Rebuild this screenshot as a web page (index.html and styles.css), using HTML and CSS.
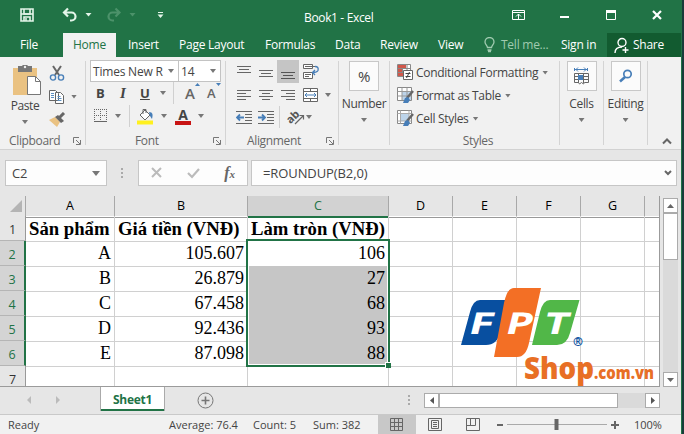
FILE: index.html
```html
<!DOCTYPE html>
<html lang="vi">
<head>
<meta charset="utf-8">
<title>Book1 - Excel</title>
<link rel="stylesheet" href="styles.css">
</head>
<body>
<div class="window">
  <header class="titlebar">
    <svg class="quick" width="170" height="33" fill="none">
      <path d="M21 9h12v12H21zM24 9v5h6V9M24 21v-4h6v4" stroke="#e4f5e9" stroke-width="1.6"/>
      <path d="M21 14h12" stroke="#e4f5e9" stroke-width="1.5"/><path d="M26 18v3" stroke="#e4f5e9" stroke-width="1.5"/>
      <path d="M68 8.500l-4 4 4 4M65 12.500h6.500a4 4 0 0 1 0 8H70" stroke="#e4f5e9" stroke-width="2.200"/>
      <path d="M85.500 13h6l-3 3.500z" fill="#e4f5e9"/>
      <path d="M115.500 8.500l4 4-4 4M119 12.500h-6.500a4 4 0 0 0 0 8h1.500" stroke="#4c926a" stroke-width="2.200"/>
      <path d="M129.500 13h6l-3 3.500z" fill="#4c926a"/>
      <path d="M158 12.500h5" stroke="#e4f5e9"/><path d="M157.500 14.500h6l-3 3.500z" fill="#e4f5e9"/>
    </svg>
    <h1>Book1 - Excel</h1>
    <svg class="controls" width="170" height="33" fill="none" stroke="#fff">
      <path d="M1.500 10.500h12v9h-12zM1.500 12.500h12M7.500 19v-5M5 16.500l2.500-2.500 2.500 2.500"/>
      <path d="M49 17h9" stroke-width="2"/>
      <path d="M95.500 11h9v8.500h-9z"/><path d="M95 11.500h10" stroke-width="3"/>
      <path d="M142 11l8 8m0-8l-8 8" stroke-width="2.200"/>
    </svg>
  </header>
  <nav class="tabs">
    <span class="tab file">File</span><span class="tab home">Home</span><span class="tab insert">Insert</span><span class="tab layout">Page Layout</span><span class="tab formulas">Formulas</span><span class="tab data">Data</span><span class="tab review">Review</span><span class="tab view">View</span>
    <span class="tab tell"><svg width="12" height="16" fill="none" stroke="#a0cbb0" stroke-width="1.300"><path d="M3.500 10.500C3 8 1 7.500 1 5a4.500 4.500 0 0 1 9 0c0 2.500-2 3-2.500 5.500zM3.500 13h4M4 14.500h3"/></svg>Tell me...</span>
    <span class="tab signin">Sign in</span>
    <span class="tab share"><svg width="16" height="17" fill="none" stroke="#fff" stroke-width="1.400"><circle cx="8" cy="5.500" r="4"/><path d="M1 16c0-4 3-6 7-6M11.500 10v6M8.500 13h6"/></svg>Share</span>
  </nav>

  <section class="ribbon">
    <div class="group clipboard">
      <div class="body">
        <div class="paste">
          <svg width="29" height="32"><path d="M0 3h24v27H0z" fill="#eac282"/><path d="M5 1h4a3.500 3.500 0 0 1 6 0h4v6H5z" fill="#777"/><circle cx="12" cy="2" r="1.200" fill="#f0f0f0"/><path d="M14.500 11.500h8l5 5v13h-13z" fill="#fff" stroke="#777"/><path d="M22.500 11.500v5h5" fill="none" stroke="#777"/></svg>
          <span>Paste</span><i class="arrow"></i>
        </div>
        <div class="tools">
          <div><svg width="16" height="17" fill="none"><path d="M4 1l6 9M12 1L6 10" stroke="#666" stroke-width="2"/><circle cx="4" cy="12.500" r="2.600" stroke="#477eb8" stroke-width="1.400"/><circle cx="12" cy="12.500" r="2.600" stroke="#477eb8" stroke-width="1.400"/></svg></div>
          <div><svg width="16" height="15" fill="#fff" stroke="#666"><path d="M.5 1.500h6l3 3v7h-9zM6.500 3.500h5l3 3v8h-8z"/><path d="M2 4.500h3M2 6.500h3M2 8.500h3M8.500 7.500h3M8.500 9.500h4M8.500 11.500h4" stroke="#5e91c2"/></svg><i class="arrow"></i></div>
          <div><svg width="17" height="16"><path d="M0 8l6-3 5 5-3 5z" fill="#eac282"/><path d="M6 5l3-2 6 6-3 2z" fill="#666"/><path d="M10 6l5-5" stroke="#666" stroke-width="3"/></svg></div>
        </div>
      </div>
      <footer>Clipboard<svg class="launcher" width="8" height="8" fill="none" stroke="#777"><path d="M.5 6V.5H6M3 3l4 4M7.500 3v4.500H3"/></svg></footer>
    </div>

    <div class="group font">
      <div class="selects"><div class="select name">Times New R<i class="arrow"></i></div><div class="select size">14<i class="arrow"></i></div></div>
      <div class="row letters"><b>B</b><em>I</em><u>U</u><i class="arrow"></i><s class="sep"></s>
        <span class="grow">A<svg width="5" height="3"><path d="M0 3h5L2.500 0z" fill="#477eb8"/></svg></span><span class="shrink">A<svg width="5" height="3"><path d="M0 0h5L2.500 3z" fill="#477eb8"/></svg></span></div>
      <div class="row fills">
        <svg width="14" height="14" fill="none" stroke="#666"><path d="M.5 0v13M6.500 0v13M12.500 0v13M0 .5h13M0 6.500h13" stroke-dasharray="1 1"/><path d="M0 12.500h13"/></svg><i class="arrow"></i><s class="sep"></s>
        <svg width="17" height="17" fill="none"><path d="M8 2l5 5-5 5-5-5zM6 6V1.500h3V5" fill="#fff" stroke="#666"/><path d="M12 4c4 0 4 3 3 7l-2-3z" fill="#477eb8"/><path d="M0 12.500h16v4H0z" fill="#fff01e"/></svg><i class="arrow"></i>
        <span class="fontcolor">A</span><i class="arrow"></i>
      </div>
      <footer>Font<svg class="launcher" width="8" height="8" fill="none" stroke="#777"><path d="M.5 6V.5H6M3 3l4 4M7.500 3v4.500H3"/></svg></footer>
    </div>

    <div class="group align">
      <div class="row r1">
        <span><svg width="14" height="14" stroke="#666"><path d="M0 1.500h14M2 4.500h10M0 7.500h14"/></svg></span>
        <span><svg width="14" height="14" stroke="#666"><path d="M0 5.500h14M2 8.500h10M0 11.500h14"/></svg></span>
        <span class="on"><svg width="14" height="14" stroke="#555"><path d="M0 7.500h14M2 10.500h10M0 13.500h14"/></svg></span>
        <svg class="wide" width="17" height="16" fill="none"><path d="M.5.500h9v4h-9zM.5 8.500h9v6h-9z" fill="#fff" stroke="#666"/><path d="M2 2.500h10M2 10.500h6M2 12.500h4" stroke="#666"/><path d="M12 2.500q4 0 3 4-1 2-5 2M12 6l-2.500 2.500L12 11" stroke="#477eb8" stroke-width="1.300"/></svg>
      </div>
      <div class="row r2">
        <span><svg width="14" height="12" stroke="#666"><path d="M0 1.500h14M0 4.500h9M0 7.500h14M0 10.500h9"/></svg></span>
        <span><svg width="14" height="12" stroke="#666"><path d="M0 1.500h14M3 4.500h8M0 7.500h14M3 10.500h8"/></svg></span>
        <span><svg width="14" height="12" stroke="#666"><path d="M0 1.500h14M5 4.500h9M0 7.500h14M5 10.500h9"/></svg></span>
        <svg class="wide" width="16" height="15" fill="none"><path d="M.5.500h14v13H.5zM.5 3.500h14M.5 10.500h14M7.500.500v3M7.500 10.500v3" fill="#fff" stroke="#666"/><path d="M2 7h11M4 5L2 7l2 2M11 5l2 2-2 2" stroke="#477eb8"/></svg><i class="arrow"></i>
      </div>
      <div class="row r3">
        <span><svg width="17" height="13" fill="none"><path d="M0 .5h16M9 3.500h7M9 6.500h7M9 9.500h7M0 12.500h16" stroke="#666"/><path d="M1 6.500h7M4 3.500l-3 3 3 3" stroke="#477eb8" stroke-width="1.800"/></svg></span>
        <span><svg width="17" height="13" fill="none"><path d="M0 .5h16M9 3.500h7M9 6.500h7M9 9.500h7M0 12.500h16" stroke="#666"/><path d="M0 6.500h7M4 3.500l3 3-3 3" stroke="#477eb8" stroke-width="1.800"/></svg></span>
        <s class="sep"></s>
        <svg class="orient" width="18" height="18" fill="none"><text x="0" y="12" transform="rotate(-45 7 10)" font-size="11" font-weight="bold" fill="#555">ab</text><path d="M8 16l8-8M12.500 7.500H16.500V11.500" stroke="#666" stroke-width="1.200"/></svg><i class="arrow"></i>
      </div>
      <footer>Alignment<svg class="launcher" width="8" height="8" fill="none" stroke="#777"><path d="M.5 6V.5H6M3 3l4 4M7.500 3v4.500H3"/></svg></footer>
    </div>

    <div class="group big number"><div class="tile">%</div><span>Number</span><i class="arrow"></i></div>

    <div class="group styles">
      <div class="item"><svg width="17" height="17"><path d="M.5.500h13v12H.5zM.5 4.500h13M.5 8.500h13M5.500.500v12M10 .5v12" fill="#fff" stroke="#888"/><path d="M1 1h8v3H1zM1 5h4v3H1zM1 9h7v3H1z" fill="#d0574b"/><path d="M6.500 6.500h9v9h-9z" fill="#fff" stroke="#666"/><path d="M8.500 9.500h5M8.500 12.500h5M12.500 8l-3 6" stroke="#444"/></svg>Conditional Formatting<i class="arrow"></i></div>
      <div class="item"><svg width="17" height="17"><path d="M.5.500h14v13H.5z" fill="#fff" stroke="#888"/><path d="M5 5h9v8H5z" fill="#bdd4ea"/><path d="M.5 4.500h14M.5 9h14M5 .5v13M10 .5v13" stroke="#999"/><path d="M16 4l-6 7" stroke="#666" stroke-width="2.500"/><path d="M6 16l2-5 3-1 2 3-2 3z" fill="#477eb8"/></svg>Format as Table<i class="arrow"></i></div>
      <div class="item"><svg width="17" height="17"><path d="M.5.500h14v13H.5z" fill="#fff" stroke="#888"/><path d="M4 4h8v7H4z" fill="#bdd4ea"/><path d="M.5 3.500h14M.5 11h14M3.500.500v13M12 .5v13" stroke="#aaa"/><path d="M16 4l-6 7" stroke="#666" stroke-width="2.500"/><path d="M6 16l2-5 3-1 2 3-2 3z" fill="#477eb8"/></svg>Cell Styles<i class="arrow"></i></div>
      <footer>Styles</footer>
    </div>

    <div class="group big cells"><div class="tile"><svg width="16" height="18" fill="none"><path d="M1 2.500h12M4 .5l-2 2 2 2M10 .5l2 2-2 2M.5 1v3M13.500 1v3" stroke="#477eb8"/><path d="M.5 6.500h14v9h-4l-1 1.500-2-1.500-2 1.500-1-1.500h-4zM.5 9.500h14M.5 12.500h14M4.500 6v10M9.500 6v10" stroke="#666"/><path d="M4 8h5v5H4z" fill="#477eb8"/></svg></div><span>Cells</span><i class="arrow"></i></div>
    <div class="group big editing"><div class="tile"><svg width="14" height="14" fill="none" stroke="#477eb8"><circle cx="8.500" cy="5" r="3.700" stroke-width="1.700"/><path d="M6 8l-5 4.500" stroke-width="2.500"/></svg></div><span>Editing</span><i class="arrow"></i></div>
    <svg class="collapse" width="10" height="7" fill="none"><path d="M1 5.500l4-4 4 4" stroke="#666" stroke-width="2"/></svg>
  </section>

  <section class="formula">
    <div class="box ref">C2<svg width="8" height="5"><path d="M0 0h8L4 5z" fill="#777"/></svg></div>
    <svg class="dots" width="3" height="12" fill="#aaa"><path d="M0 1h2v2H0zM0 5h2v2H0zM0 9h2v2H0z"/></svg>
    <div class="box actions"><svg width="12" height="12" fill="none" stroke="#bbb" stroke-width="2"><path d="M1 1l9 9M10 1l-9 9"/></svg><svg width="14" height="12" fill="none" stroke="#bbb" stroke-width="2.200"><path d="M1 6l4 4 7-8"/></svg><span class="fx">f<small>x</small></span></div>
    <div class="box input">=ROUNDUP(B2,0)<svg width="8" height="6" fill="none" stroke="#666" stroke-width="2"><path d="M1 1l3 3 3-3"/></svg></div>
  </section>

  <main class="work">
    <div class="sheet">
      <div class="line heads"><span class="corner"><svg width="12" height="12"><path d="M12 0v12H0z" fill="#b4b4b4"/></svg></span><span>A</span><span>B</span><span class="active">C</span><span>D</span><span>E</span><span>F</span><span>G</span><span></span></div>
      <div class="line title"><span class="num plain">1</span><span>Sản phẩm</span><span>Giá tiền (VNĐ)</span><span>Làm tròn (VNĐ)</span><span></span><span></span><span></span><span></span><span></span></div>
      <div class="line"><span class="num">2</span><span>A</span><span>105.607</span><span>106</span><span></span><span></span><span></span><span></span><span></span></div>
      <div class="line"><span class="num">3</span><span>B</span><span>26.879</span><span class="sel">27</span><span></span><span></span><span></span><span></span><span></span></div>
      <div class="line"><span class="num">4</span><span>C</span><span>67.458</span><span class="sel">68</span><span></span><span></span><span></span><span></span><span></span></div>
      <div class="line"><span class="num">5</span><span>D</span><span>92.436</span><span class="sel">93</span><span></span><span></span><span></span><span></span><span></span></div>
      <div class="line"><span class="num">6</span><span>E</span><span>87.098</span><span class="sel">88</span><span></span><span></span><span></span><span></span><span></span></div>
      <div class="line last"><span class="num plain">7</span><span></span><span></span><span></span><span></span><span></span><span></span><span></span><span></span></div>
      <div class="selection"><i></i></div>
      <svg class="logo" width="200" height="100">
        <path d="M20 12h29L40 45q-3 12-14 12H1L10 24Q13 12 20 12z" fill="#084fa0"/>
        <path d="M54 0h27L69 55q-3 14-12 14H34L44 15Q47 0 54 0z" fill="#f36f25"/>
        <path d="M90 12h29.500L110 45q-3 12-13 12H72L80 24Q83 12 90 12z" fill="#51b748"/>
        <g fill="#fff" font-family="Open Sans" font-weight="700" font-size="30">
          <text transform="translate(7 46) skewX(-14)" textLength="25" lengthAdjust="spacingAndGlyphs">F</text>
          <text transform="translate(44 46) skewX(-14)" textLength="27" lengthAdjust="spacingAndGlyphs">P</text>
          <text transform="translate(82 46) skewX(-14)" textLength="25" lengthAdjust="spacingAndGlyphs">T</text>
        </g>
        <text x="113" y="58" font-family="Open Sans" font-size="12" font-weight="bold" fill="#084fa0">®</text>
        <g fill="#e86f25" font-family="Open Sans" font-weight="800"><text x="64" y="91" font-size="30" textLength="70" lengthAdjust="spacingAndGlyphs">Shop</text><text x="134" y="91" font-size="18" textLength="60" lengthAdjust="spacingAndGlyphs">.com.vn</text></g>
      </svg>
    </div>
    <div class="vscroll"><div class="btn"><svg width="7" height="4"><path d="M0 4h7L3.500 0z" fill="#666"/></svg></div><div class="thumb"></div><div class="btn end"><svg width="7" height="4"><path d="M0 0h7L3.500 4z" fill="#666"/></svg></div></div>
  </main>

  <section class="sheettabs">
    <svg class="nav" width="34" height="8" fill="#bbb"><path d="M4 0v8L0 4zM29 0v8l4-4z"/></svg>
    <span class="sheettab">Sheet1</span>
    <svg class="add" width="17" height="17" fill="none" stroke="#777"><circle cx="8.500" cy="8.500" r="7.500"/><path d="M8.500 4.500v8M4.500 8.500h8" stroke-width="1.600"/></svg>
    <svg class="grip" width="2" height="12" fill="#aaa"><path d="M0 1h2v2H0zM0 5h2v2H0zM0 9h2v2H0z"/></svg>
    <div class="hscroll"><div class="btn"><svg width="4" height="7"><path d="M4 0v7L0 3.500z" fill="#555"/></svg></div><div class="thumb"></div><div class="btn end"><svg width="4" height="7"><path d="M0 0v7l4-3.500z" fill="#555"/></svg></div></div>
  </section>

  <footer class="status">
    <span class="ready">Ready</span><span class="avg">Average: 76.4</span><span class="count">Count: 5</span><span class="sum">Sum: 382</span>
    <span class="viewmode"><svg width="14" height="14" fill="none" stroke="#666"><path d="M.5.500h12v12H.5zM4.500.500v12M8.500.500v12M.5 4.500h12M.5 8.500h12"/></svg></span>
    <svg class="pagelayout" width="14" height="13" fill="none" stroke="#666"><path d="M.5.500h13v12H.5zM3.500 2.500h7v8h-7zM5 4.500h4M5 6.500h4M5 8.500h4"/></svg>
    <svg class="pagebreak" width="14" height="13" fill="none" stroke="#666"><path d="M.5.500h13v12H.5zM4.500.500v7M9.500.500v7M.5 7.500h9"/></svg>
    <svg class="zoom" width="124" height="14" stroke="#666"><path d="M1 7h6M115 7h8M119 3v8" stroke-width="2"/><path d="M11 6.500h100" stroke="#aaa"/><path d="M60.500 1v11" stroke-width="4"/></svg>
    <span class="percent">100%</span>
  </footer>
</div>
</body>
</html>
```
FILE: styles.css
```css
* { box-sizing: border-box; }
body { margin: 0; width: 684px; height: 434px; overflow: hidden; background: #183c3a; font-family: "Open Sans", "Noto Sans", sans-serif; font-size: 12px; color: #444; }
.window { width: 682px; height: 434px; display: flex; flex-direction: column; background: #e6e6e6; border-right: 1px solid #217346; }
svg { display: block; flex: none; }
h1 { margin: 0; font-size: 12px; font-weight: 400; }
.arrow { flex: none; width: 6px; height: 4px; background: #777; clip-path: polygon(0 0, 100% 0, 50% 100%); }
.sep { width: 1px; background: #d0d0d0; align-self: stretch; }

.titlebar { height: 33px; flex: none; display: flex; background: #217346; color: #fff; }
.titlebar h1 { margin-left: 134px; width: 209px; line-height: 35px; letter-spacing: -.35px; }
.tabs { height: 24px; flex: none; display: flex; background: #217346; color: #fff; line-height: 24px; letter-spacing: -.25px; white-space: nowrap; }
.tab { flex: none; display: flex; align-items: center; }
.file { width: 63px; padding-left: 20px; }
.home { width: 53px; padding-left: 10px; background: #f1f1f1; color: #217346; }
.insert { width: 63px; padding-left: 12px; }
.layout { width: 86px; }
.formulas { width: 70px; }
.data { width: 45px; }
.review { width: 58px; }
.view { width: 46px; }
.tell { width: 77px; gap: 5px; color: #a0cbb0; }
.signin { width: 46px; }
.share { width: 74px; padding-left: 7px; gap: 3px; background: #125b30; }

.ribbon { height: 93px; flex: none; display: flex; background: #f1f1f1; border-bottom: 1px solid #d2d2d2; }
.group { position: relative; height: 84px; margin-top: 4px; border-right: 1px solid #d4d4d4; display: flex; flex-direction: column; flex: none; }
.group footer { margin-top: auto; height: 13px; display: flex; justify-content: center; line-height: 18px; color: #666; letter-spacing: -.35px; }
.launcher { margin: 5px 0 0 auto; }
.clipboard { width: 86px; padding: 0 4px 0 9px; }
.body { display: flex; }
.paste { width: 32px; display: flex; flex-direction: column; align-items: center; padding-top: 4px; }
.paste svg { margin-left: 4px; }
.paste span { line-height: 17px; margin-bottom: 6px; letter-spacing: -.4px; }
.tools { margin-left: 8px; padding-top: 1px; }
.tools div { height: 23px; display: flex; align-items: center; gap: 6px; }
.font { width: 140px; padding: 0 4px; }
.selects { display: flex; margin-top: -1px; }
.select { height: 22px; border: 1px solid #c3c3c3; background: #fff; display: flex; align-items: center; justify-content: space-between; padding: 0 4px 0 2px; letter-spacing: -.2px; white-space: nowrap; }
.name { width: 89px; }
.size { width: 43px; margin-left: -1px; }
.row { display: flex; align-items: center; height: 22px; }
.letters { font-size: 13px; padding-left: 6px; }
.letters b, .letters em, .letters u { width: 22px; font-weight: 700; flex: none; }
.letters em { font-family: "Liberation Serif", serif; font-size: 15px; padding-left: 2px; }
.letters u { width: 20px; }
.letters .sep { margin-left: 7px; }
.grow, .shrink { display: flex; align-items: flex-start; font-size: 15px; font-weight: 600; line-height: 20px; color: #666; }
.grow { margin-left: 11px; width: 22px; }
.shrink { font-size: 13px; }
.fills { padding-left: 4px; margin-top: 1px; }
.fills .arrow { margin-left: 7px; }
.fills .sep { margin: 0 7px 0 8px; }
.fontcolor { margin-left: 8px; width: 16px; height: 17px; border-bottom: 4px solid #c81414; text-align: center; font-weight: 700; font-size: 14px; line-height: 13px; }
.group.font footer { padding-left: 45px; }
.align { width: 113px; padding: 0 4px 0 7px; }
.r1 { margin-top: -1px; height: 23px; }
.r1 > span, .r2 > span, .r3 > span { width: 22px; height: 22px; display: flex; align-items: center; justify-content: center; flex: none; }
.r1 > .on { background: #c5c5c5; height: 23px; }
.wide { margin-left: 4px; }
.r2 { margin-top: 1px; }
.r2 .arrow { margin-left: 6px; }
.r3 .sep { margin: 0 7px 0 2px; }
.orient { overflow: visible; }
.r3 .arrow { margin-left: 1px; }
.group.align footer { padding-left: 14px; }
.big { align-items: center; letter-spacing: -.35px; }
.tile { width: 30px; height: 30px; border: 1px solid #c8c8c8; background: #fbfbfb; display: flex; align-items: center; justify-content: center; font-size: 15px; }
.big span { margin: 5px 0 6px; line-height: 16px; }
.number { width: 51px; }
.styles { width: 170px; padding-left: 7px; }
.item { height: 23px; display: flex; align-items: center; letter-spacing: -.3px; white-space: nowrap; }
.item svg { margin-right: 2px; }
.item .arrow { margin-left: 4px; }
.cells, .editing { width: 44px; }
.collapse { margin: 81px 0 0 14px; }

.formula { height: 46px; flex: none; display: flex; align-items: flex-start; padding: 10px 0 0 5px; }
.box { height: 26px; border: 1px solid #c6c6c6; background: #fdfdfd; display: flex; align-items: center; justify-content: space-between; font-size: 13px; letter-spacing: -.1px; }
.ref { width: 102px; padding: 0 6px; }
.dots { margin: 7px 14px 0; }
.actions { width: 110px; padding: 0 12px; }
.fx { font-family: "Liberation Serif", serif; font-style: italic; font-weight: 700; font-size: 16px; color: #666; }
.fx small { font-size: 11px; }
.input { width: 426px; margin-left: 3px; padding: 0 4px 0 11px; }

.work { flex: none; height: 191px; display: flex; }
.sheet { position: relative; width: 660px; height: 191px; border-right: 1px solid #9b9b9b; border-bottom: 1px solid #9b9b9b; }
.line { display: grid; grid-template-columns: 26px 89px 133px 141px 64px 64px 64px 64px 14px; height: 25px; font: 18px/25px "Liberation Serif", serif; color: #000; background: #fff; }
.line > span { border-right: 1px solid #d0d0d0; border-bottom: 1px solid #d0d0d0; text-align: right; padding-right: 3px; white-space: nowrap; }
.line > span:last-child { border-right: 0; }
.line.last { height: 20px; }
.last > span { border-bottom: 0; }
.heads { height: 20px; background: #e6e6e6; font: 12.5px/20px "Open Sans", sans-serif; }
.heads > span { text-align: center; padding: 0; border-right-color: #a8a8a8; border-bottom-color: #999; }
.heads .corner { padding: 4px 0 0 10px; }
.heads > .active { background: #d2d2d2; color: #217346; border-bottom: 2px solid #217346; }
.title { font-weight: 700; font-size: 18.7px; }
.title > span { text-align: left; padding: 0 0 0 3px; }
.line > .num { font: 12.5px/27px "Open Sans", sans-serif; height: 25px; text-align: center; padding: 0; color: #217346; background: #d4d4d4; border-right: 2px solid #217346; border-bottom-color: #b5b5b5; }
.line > .plain { background: #e6e6e6; color: #333; border-right: 1px solid #999; }
.last > .num { height: 20px; border-bottom: 0; }
.line > .sel { background: #c6c6c6; border-bottom-color: #aaa; }
.selection { position: absolute; left: 246px; top: 43px; width: 144px; height: 128px; border: 2px solid #217346; box-shadow: inset 0 0 0 1px #fff; }
.selection i { position: absolute; right: -3px; bottom: -3px; width: 6px; height: 6px; background: #217346; border: 1px solid #fff; border-width: 1px 0 0 1px; }
.logo { position: absolute; left: 460px; top: 92px; }
.vscroll { width: 15px; height: 189px; margin: 2px 0 0 3px; background: #dadada; display: flex; flex-direction: column; }
.btn, .thumb { border: 1px solid #ababab; background: #fff; }
.btn { width: 15px; height: 15px; flex: none; display: flex; align-items: center; justify-content: center; }
.vscroll .thumb { height: 47px; }
.vscroll .end { margin-top: auto; }

.sheettabs { height: 27px; flex: none; display: flex; align-items: flex-start; }
.nav { margin: 9px 0 0 27px; }
.sheettab { width: 65px; height: 24px; margin-left: 39px; background: #fff; border: 1px solid #aaa; border-width: 0 1px; box-shadow: inset 0 -2px #217346; text-align: center; font-weight: 700; line-height: 25px; color: #217346; letter-spacing: -.3px; }
.add { margin: 5px 0 0 32px; }
.grip { margin: 7px 0 0 194px; }
.hscroll { width: 236px; margin: 6px 0 0 14px; display: flex; background: #dadada; }
.hscroll .thumb { width: 179px; }
.hscroll .end { margin-left: auto; }

.status { height: 20px; flex: none; display: flex; align-items: center; border-top: 1px solid #c9c9c9; background: #f1f1f1; font-size: 11px; white-space: nowrap; }
.ready { width: 161px; margin-left: 8px; }
.avg { width: 84px; }
.count { width: 60px; }
.sum { width: 65px; }
.viewmode { width: 38px; height: 19px; background: #c8c8c8; display: flex; align-items: center; justify-content: center; }
.pagelayout { margin-left: 12px; }
.pagebreak { margin-left: 24px; }
.zoom { margin-left: 16px; }
.percent { margin-left: 14px; }
```
